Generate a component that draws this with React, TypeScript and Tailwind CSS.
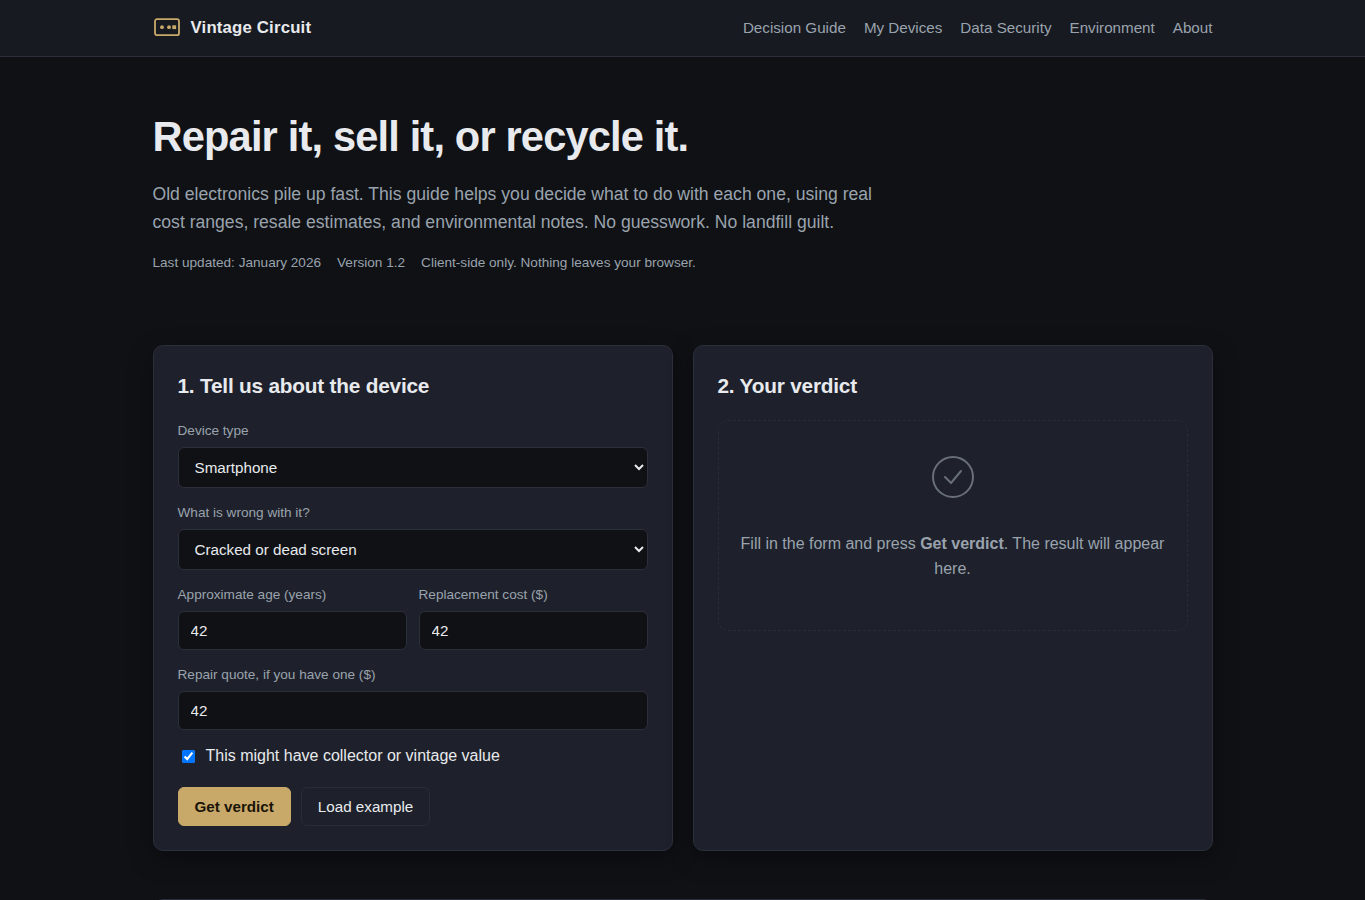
import { FormEvent, ReactNode, useState } from "react";

const navLinks = [
  "Decision Guide",
  "My Devices",
  "Data Security",
  "Environment",
  "About",
];

const deviceTypes = ["Smartphone", "Laptop", "Tablet", "Game console", "Camera"];

const issues = [
  "Cracked or dead screen",
  "Battery will not hold a charge",
  "Will not power on",
  "Works fine, just old",
];

const emptyForm = {
  device: deviceTypes[0],
  issue: issues[0],
  age: "42",
  replacement: "42",
  quote: "42",
  vintage: true,
};

const controlClass =
  "block w-full rounded-md border border-[#2a2f3a] bg-[#0f1115] px-3 text-[15.2px] text-[#e8eaed]";

type FieldProps = {
  label: string;
  htmlFor: string;
  children: ReactNode;
};

const Field = ({ label, htmlFor, children }: FieldProps) => {
  return (
    <div className="mb-3.5">
      <label
        htmlFor={htmlFor}
        className="block mb-1.5 text-[13.6px] leading-[21px] text-[#9aa3ad]"
      >
        {label}
      </label>
      {children}
    </div>
  );
};

const Header = () => {
  return (
    <header className="border-b border-[#2a2f3a] bg-[#171a21]">
      <div className="mx-auto flex h-14 max-w-[1100px] items-center justify-between px-5">
        <a href="#" className="flex items-center gap-2.5 text-[#e8eaed]">
          <svg width="28" height="28" viewBox="0 0 28 28" fill="none">
            <rect
              x="2"
              y="5.2"
              width="24"
              height="16"
              rx="2"
              stroke="#c8a96a"
              strokeWidth="1.8"
            />
            <circle cx="9" cy="13.2" r="1.9" fill="#c8a96a" />
            <circle cx="16" cy="13.2" r="1.9" fill="#c8a96a" />
            <rect x="19.3" y="11.3" width="3.8" height="3.8" fill="#c8a96a" />
          </svg>
          <span className="text-[16.8px] font-bold tracking-[0.01em]">
            Vintage Circuit
          </span>
        </a>
        <nav className="flex gap-[18px] text-[15.2px] text-[#9aa3ad]">
          {navLinks.map((link) => (
            <a key={link} href="#">
              {link}
            </a>
          ))}
        </nav>
      </div>
    </header>
  );
};

const App = () => {
  const [form, setForm] = useState(emptyForm);

  const handleSubmit = (e: FormEvent) => {
    e.preventDefault();
  };

  return (
    <div className="h-[900px] overflow-hidden bg-[#0f1115] font-['Liberation_Sans',Arial,sans-serif] text-base leading-[1.6] text-[#e8eaed]">
      <Header />
      <main className="mx-auto max-w-[1100px] px-5">
        <section className="pt-[56px]">
          <h1 className="text-[41.6px] font-bold leading-[48px] tracking-[-0.02em]">
            Repair it, sell it, or recycle it.
          </h1>
          <p className="mt-[19px] max-w-[720px] text-[17.6px] leading-[28px] text-[#9aa3ad]">
            Old electronics pile up fast. This guide helps you decide what to do
            with each one, using real cost ranges, resale estimates, and
            environmental notes. No guesswork. No landfill guilt.
          </p>
          <div className="mt-4 flex gap-4 text-[13.6px] leading-[22px] text-[#9aa3ad]">
            <span>Last updated: January 2026</span>
            <span>Version 1.2</span>
            <span>Client-side only. Nothing leaves your browser.</span>
          </div>
        </section>

        <section className="mt-[71px] grid grid-cols-2 gap-5">
          <form
            onSubmit={handleSubmit}
            className="h-[506px] rounded-[10px] border border-[#2a2f3a] bg-[#1e212b] p-6 shadow-[0_8px_24px_rgba(0,0,0,0.35)]"
          >
            <h2 className="mb-[19px] text-[20.8px] font-bold leading-[31px] tracking-[-0.01em]">
              1. Tell us about the device
            </h2>
            <Field label="Device type" htmlFor="device">
              <select
                id="device"
                value={form.device}
                onChange={(e) => setForm({ ...form, device: e.target.value })}
                className={controlClass + " h-[41px]"}
              >
                {deviceTypes.map((d) => (
                  <option key={d}>{d}</option>
                ))}
              </select>
            </Field>
            <Field label="What is wrong with it?" htmlFor="issue">
              <select
                id="issue"
                value={form.issue}
                onChange={(e) => setForm({ ...form, issue: e.target.value })}
                className={controlClass + " h-[41px]"}
              >
                {issues.map((i) => (
                  <option key={i}>{i}</option>
                ))}
              </select>
            </Field>
            <div className="grid grid-cols-2 gap-3">
              <Field label="Approximate age (years)" htmlFor="age">
                <input
                  id="age"
                  value={form.age}
                  onChange={(e) => setForm({ ...form, age: e.target.value })}
                  className={controlClass + " h-[39px]"}
                />
              </Field>
              <Field label="Replacement cost ($)" htmlFor="replacement">
                <input
                  id="replacement"
                  value={form.replacement}
                  onChange={(e) =>
                    setForm({ ...form, replacement: e.target.value })
                  }
                  className={controlClass + " h-[39px]"}
                />
              </Field>
            </div>
            <Field label="Repair quote, if you have one ($)" htmlFor="quote">
              <input
                id="quote"
                value={form.quote}
                onChange={(e) => setForm({ ...form, quote: e.target.value })}
                className={controlClass + " h-[39px]"}
              />
            </Field>
            <label className="-mt-px flex items-center gap-2 leading-[25px]">
              <input
                type="checkbox"
                checked={form.vintage}
                onChange={(e) => setForm({ ...form, vintage: e.target.checked })}
                className="mt-[5px] mr-[3px] mb-[3px] ml-1 size-[13px]"
              />
              This might have collector or vintage value
            </label>
            <div className="mt-[19px] flex gap-2.5 text-[15.2px]">
              <button
                type="submit"
                className="h-[39px] rounded-md border border-[#c8a96a] bg-[#c8a96a] px-4 pt-px font-bold text-[#1a1408]"
              >
                Get verdict
              </button>
              <button
                type="button"
                onClick={() => setForm(emptyForm)}
                className="h-[39px] rounded-md border border-[#282c37] px-4 pt-px text-[#e8eaed]"
              >
                Load example
              </button>
            </div>
          </form>

          <div className="h-[506px] rounded-[10px] border border-[#2a2f3a] bg-[#1e212b] p-6 shadow-[0_8px_24px_rgba(0,0,0,0.35)]">
            <h2 className="mb-[19px] text-[20.8px] font-bold leading-[31px] tracking-[-0.01em]">
              2. Your verdict
            </h2>
            <div className="flex h-[211px] flex-col items-center rounded-[10px] border border-dashed border-[#282c37] px-5 pt-8 text-center text-[#9aa3ad]">
              <svg
                width="48"
                height="48"
                viewBox="0 0 48 48"
                fill="none"
                stroke="currentColor"
                strokeWidth="2"
                strokeLinecap="round"
                strokeLinejoin="round"
                className="shrink-0 opacity-60"
              >
                <circle cx="24" cy="24" r="20" />
                <path d="M16 24l6 6 10-12" />
              </svg>
              <p className="mt-[30px] leading-[25px]">
                Fill in the form and press <strong>Get verdict</strong>. The
                result will appear here.
              </p>
            </div>
          </div>
        </section>

        <section className="mt-12 h-40 rounded-[10px] border border-[#2a2f3a] bg-[#1e212b]" />
      </main>
    </div>
  );
};

export default App;
